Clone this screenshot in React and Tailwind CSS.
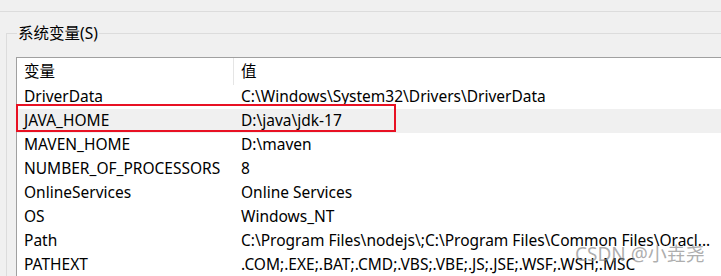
import React from "react";

const rows = [
  ["DriverData", "C:\\Windows\\System32\\Drivers\\DriverData"],
  ["JAVA_HOME", "D:\\java\\jdk-17"],
  ["MAVEN_HOME", "D:\\maven"],
  ["NUMBER_OF_PROCESSORS", "8"],
  ["OnlineServices", "Online Services"],
  ["OS", "Windows_NT"],
  ["Path", "C:\\Program Files\\nodejs\\;C:\\Program Files\\Common Files\\Oracl..."],
  ["PATHEXT", ".COM;.EXE;.BAT;.CMD;.VBS;.VBE;.JS;.JSE;.WSF;.WSH;.MSC"],
];

export default function App() {
  return (
    <div
      className="relative w-[721px] h-[276px] overflow-hidden bg-[#f0f0f0] text-[15.5px] text-black"
      style={{ fontFamily: '"Noto Sans", "Noto Sans CJK SC", sans-serif' }}
    >
      <div className="h-[12px] border-b border-[#dcdcdc]" />
      <fieldset className="mt-[11px] ml-[6px] w-[760px] border-l border-t border-[#dcdcdc] pl-[9px] pt-[14px]">
        <legend className="ml-[1px] px-[1px] leading-[20px]">系统变量(S)</legend>
        <div className="w-[760px] border-l border-t border-[#a0a0a0] bg-white">
          <div className="flex h-[27px] items-center">
            <div className="w-[217px] h-full flex items-center pl-[7px] border-r border-[#e5e5e5]">变量</div>
            <div className="pl-[7px]">值</div>
          </div>
          {rows.map(([k, v], i) => (
            <div
              key={k}
              className={
                "flex h-[24px] items-center whitespace-nowrap " +
                (i === 1 ? "bg-[#f0f0f0]" : "")
              }
            >
              <div className="w-[218px] shrink-0 pl-[7px]">{k}</div>
              <div className="pl-[6px]">{v}</div>
            </div>
          ))}
        </div>
      </fieldset>
      <div className="absolute left-[16px] top-[104px] w-[380px] h-[28px] border-2 border-[#e81123]" />
      <div
        className="absolute left-[575px] top-[242px] text-[19px] leading-[24px] text-[#8a8a8a]/70"
        style={{ fontFamily: '"Noto Sans", "Noto Sans CJK SC", sans-serif' }}
      >
        CSDN @小垚尧
      </div>
    </div>
  );
}
